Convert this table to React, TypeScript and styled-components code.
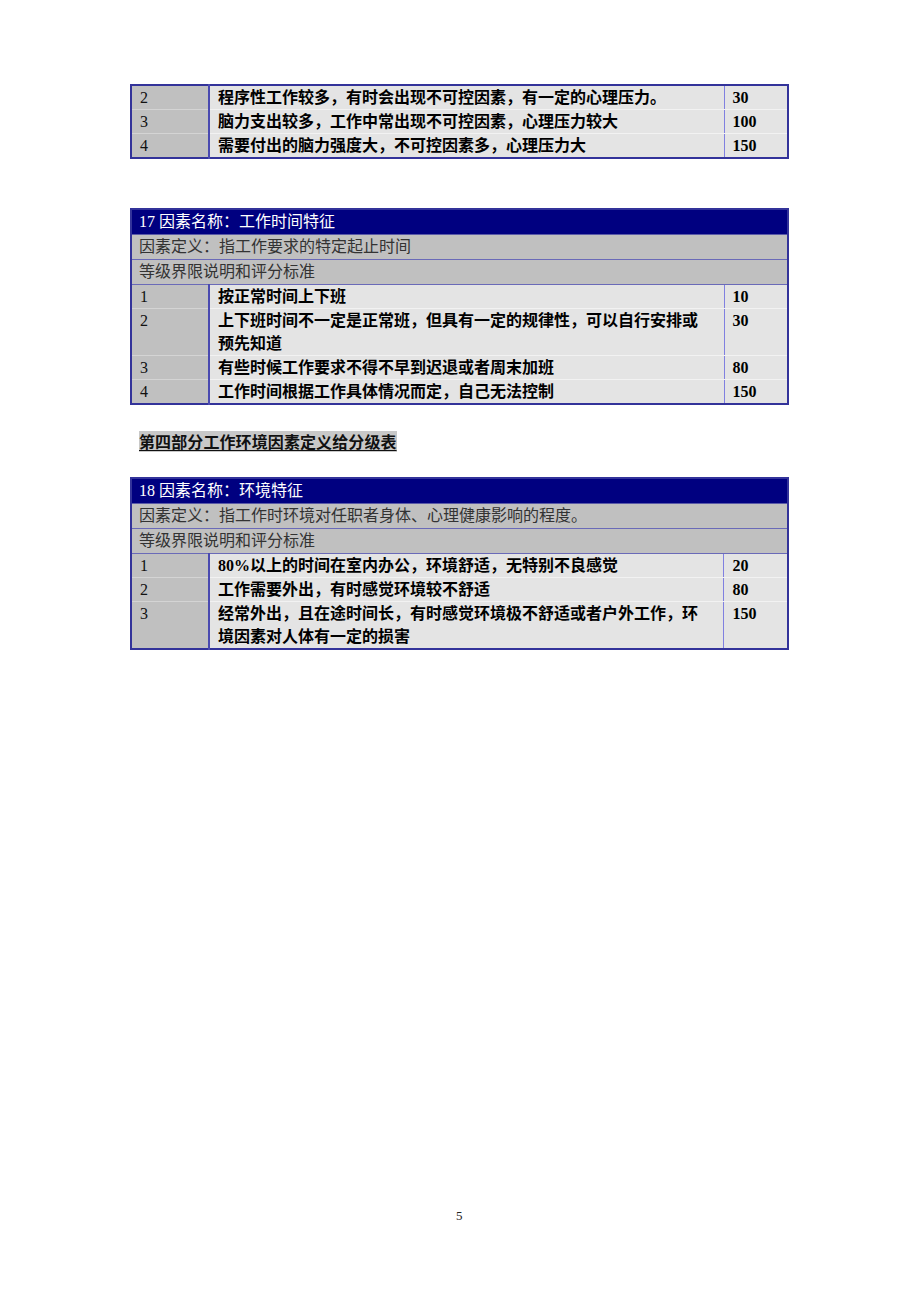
import React from "react";
import styled, { createGlobalStyle } from "styled-components";

const GlobalStyle = createGlobalStyle`
  html, body {
    margin: 0;
    padding: 0;
    background: #fff;
  }
  body {
    font-family: "Liberation Serif", "Noto Sans CJK SC", serif;
  }
`;

const Page = styled.div`
  width: 920px;
  height: 1302px;
  box-sizing: border-box;
  padding: 84px 0 0 130px;
  display: flex;
  flex-direction: column;
  position: relative;
`;

const Table = styled.table<{ $gap?: number }>`
  width: 659px;
  border-collapse: collapse;
  border: 2px solid #33339a;
  margin-bottom: ${(p) => p.$gap ?? 0}px;
  table-layout: fixed;
`;

const HeadCell = styled.td`
  background: #000080;
  color: #fff;
  font-size: 16px;
  line-height: 24px;
  height: 24px;
  padding: 0 7px;
  border-bottom: 1px solid #5a5aa8;
`;

const InfoCell = styled.td`
  background: #c0c0c0;
  color: #333;
  font-size: 16px;
  line-height: 24px;
  height: 24px;
  padding: 0 7px;
  border-bottom: 1px solid #6a6ab8;
`;

const LevelCell = styled.td<{ $last?: boolean }>`
  background: #c0c0c0;
  color: #111;
  font-size: 16px;
  line-height: 23px;
  padding: 0 8px;
  vertical-align: top;
  border-right: 2px solid #4a4ab0;
  border-bottom: ${(p) => (p.$last ? "none" : "1px solid #d4d4d4")};
`;

const DescCell = styled.td<{ $last?: boolean }>`
  background: #e4e4e4;
  color: #000;
  font-family: "Liberation Serif", "Noto Sans CJK SC", serif;
  font-weight: 700;
  font-size: 16px;
  line-height: 23px;
  padding: 0 8px;
  white-space: pre-line;
  vertical-align: top;
  border-right: 1px solid #8080e0;
  border-bottom: ${(p) => (p.$last ? "none" : "1px solid #f2f2f2")};
`;

const ScoreCell = styled.td<{ $last?: boolean }>`
  background: #e4e4e4;
  color: #000;
  font-weight: 700;
  font-size: 16px;
  line-height: 23px;
  padding: 0 8px;
  vertical-align: top;
  border-bottom: ${(p) => (p.$last ? "none" : "1px solid #f2f2f2")};
`;

const SectionTitle = styled.div`
  margin: 2px 0 25px 9px;
  align-self: flex-start;
  background: #c8c8c8;
  font-family: "Noto Sans CJK SC", sans-serif;
  font-weight: 700;
  font-size: 16px;
  line-height: 21px;
  color: #111;
  text-decoration: underline;
  text-underline-offset: 2px;
  letter-spacing: 0.1px;
`;

const PageNumber = styled.div`
  position: absolute;
  left: 456px;
  top: 1208px;
  font-size: 13px;
  color: #222;
`;

type Row = { level: string; text: string; score: string };

const LevelRows: React.FC<{ rows: Row[] }> = ({ rows }) => (
  <>
    {rows.map((r, i) => {
      const last = i === rows.length - 1;
      return (
        <tr key={r.level}>
          <LevelCell $last={last}>{r.level}</LevelCell>
          <DescCell $last={last}>{r.text}</DescCell>
          <ScoreCell $last={last}>{r.score}</ScoreCell>
        </tr>
      );
    })}
  </>
);

const Cols = () => (
  <colgroup>
    <col style={{ width: 78 }} />
    <col />
    <col style={{ width: 64 }} />
  </colgroup>
);

const FactorTable: React.FC<{
  title: string;
  definition: string;
  rows: Row[];
  gap?: number;
}> = ({ title, definition, rows, gap }) => (
  <Table $gap={gap}>
    <Cols />
    <tbody>
      <tr>
        <HeadCell colSpan={3}>{title}</HeadCell>
      </tr>
      <tr>
        <InfoCell colSpan={3}>{definition}</InfoCell>
      </tr>
      <tr>
        <InfoCell colSpan={3}>等级界限说明和评分标准</InfoCell>
      </tr>
      <LevelRows rows={rows} />
    </tbody>
  </Table>
);

const pressureRows: Row[] = [
  { level: "2", text: "程序性工作较多，有时会出现不可控因素，有一定的心理压力。", score: "30" },
  { level: "3", text: "脑力支出较多，工作中常出现不可控因素，心理压力较大", score: "100" },
  { level: "4", text: "需要付出的脑力强度大，不可控因素多，心理压力大", score: "150" },
];

const timeRows: Row[] = [
  { level: "1", text: "按正常时间上下班", score: "10" },
  {
    level: "2",
    text: "上下班时间不一定是正常班，但具有一定的规律性，可以自行安排或\n预先知道",
    score: "30",
  },
  { level: "3", text: "有些时候工作要求不得不早到迟退或者周末加班", score: "80" },
  { level: "4", text: "工作时间根据工作具体情况而定，自己无法控制", score: "150" },
];

const envRows: Row[] = [
  { level: "1", text: "80%以上的时间在室内办公，环境舒适，无特别不良感觉", score: "20" },
  { level: "2", text: "工作需要外出，有时感觉环境较不舒适", score: "80" },
  {
    level: "3",
    text: "经常外出，且在途时间长，有时感觉环境极不舒适或者户外工作，环\n境因素对人体有一定的损害",
    score: "150",
  },
];

export default function App() {
  return (
    <>
      <GlobalStyle />
      <Page>
        <Table $gap={49}>
          <Cols />
          <tbody>
            <LevelRows rows={pressureRows} />
          </tbody>
        </Table>
        <FactorTable
          title="17 因素名称：工作时间特征"
          definition="因素定义：指工作要求的特定起止时间"
          rows={timeRows}
          gap={24}
        />
        <SectionTitle>第四部分工作环境因素定义给分级表</SectionTitle>
        <FactorTable
          title="18 因素名称：环境特征"
          definition="因素定义：指工作时环境对任职者身体、心理健康影响的程度。"
          rows={envRows}
        />
        <PageNumber>5</PageNumber>
      </Page>
    </>
  );
}
